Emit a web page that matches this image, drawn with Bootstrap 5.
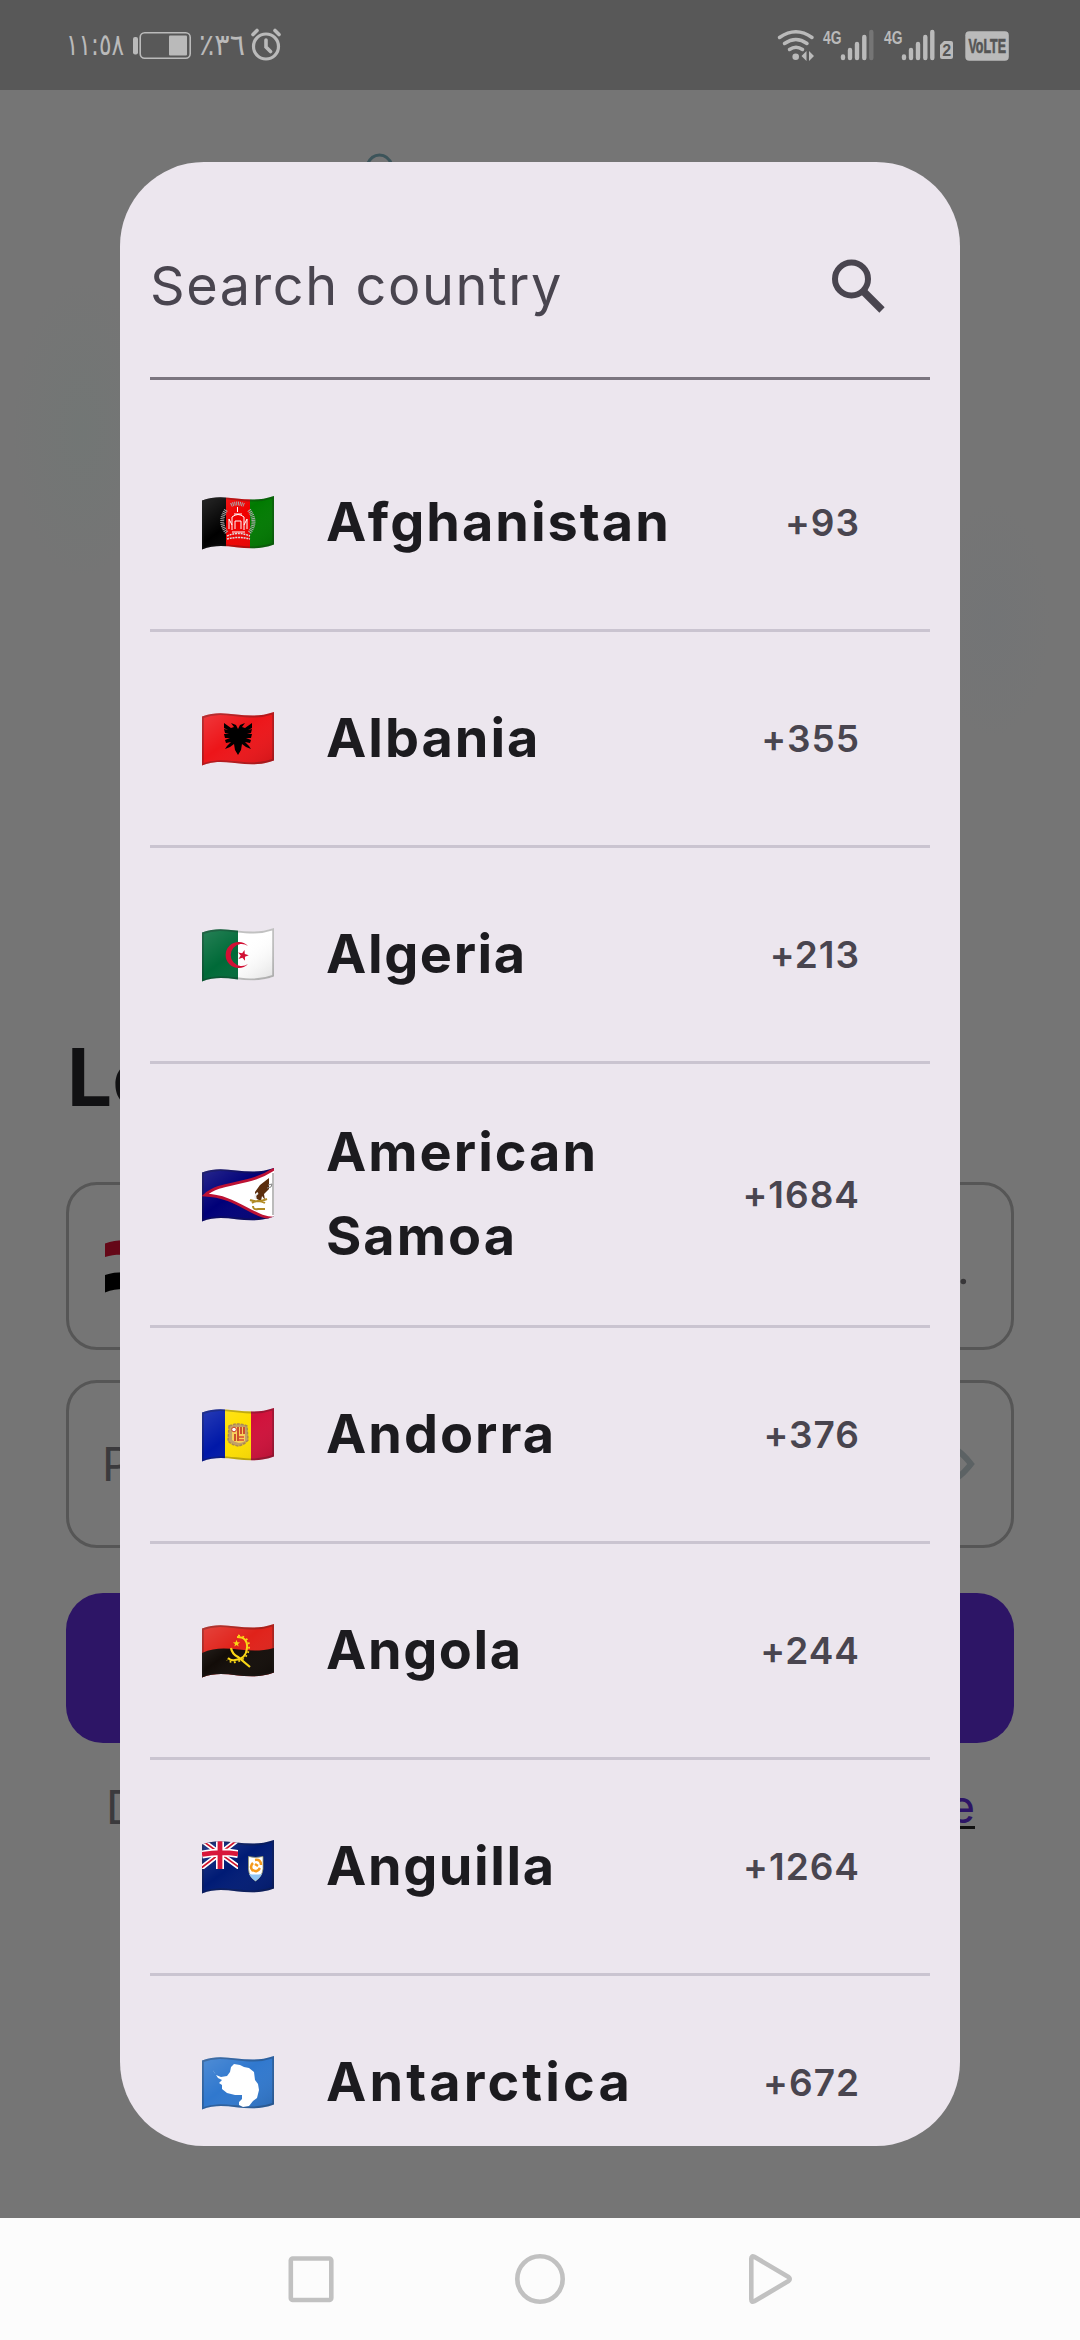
<!DOCTYPE html>
<html lang="en">
<head>
<meta charset="utf-8">
<meta name="viewport" content="width=device-width, initial-scale=1">
<title>Select country</title>
<link href="https://cdn.jsdelivr.net/npm/bootstrap@5.3.0/dist/css/bootstrap.min.css" rel="stylesheet">
<style>
body{width:1080px;height:2340px;overflow:hidden;background:#757575;font-family:Inter,"Liberation Sans",sans-serif;color:#1c1b1f}
.status{height:90px;background:#585858}
.screen{height:2128px;padding:0 66px;background:radial-gradient(ellipse 70px 150px at 82px 340px,rgba(95,125,115,.14),transparent),radial-gradient(ellipse 60px 120px at 992px 530px,rgba(95,110,125,.1),transparent),#757575}
.arch{left:366px;top:153px}
.dot{left:958px;top:1276px}
.heading{padding-top:939px;font-size:80px;line-height:96px;font-weight:700;color:#111113;height:1092px;padding-left:1px}
.field{height:168px;border:3px solid #565656;border-radius:31px;margin-bottom:30px;padding:0 36px;font-size:46px;color:#3b3a3d}
.field span{margin-left:-3px}
.cta{height:150px;border-radius:37px;background:#2d1566;margin-top:45px}
.foot{height:129px;padding:0 39px 0 40px;font-size:46px;color:#3b3a3d}
.foot .signup{color:#2d1566;text-decoration:none;border-bottom:3px solid #111;line-height:40px}
.sheet{left:120px;top:162px;width:840px;height:1984px;border-radius:84px;background:#ece6ee;padding:0 30px}
.search{height:218px;margin-bottom:36px;padding:32px 44px 0 0;border-bottom:3px solid #7b757f;font-size:54px;color:#49454f;letter-spacing:1.6px}
.country{height:216px;padding:0 70px 0 52px;border-bottom:3px solid #cac4d0}
.country.tall{height:264px}
.country:last-child{border-color:transparent}
.cname{width:390px;margin-left:52px;padding-bottom:2px;font-size:54px;line-height:84px;font-weight:700;letter-spacing:2px}
.cname.snug{letter-spacing:1.6px}
.cname.loose{letter-spacing:3.1px}
.ccode{font-size:37px;font-weight:600;color:#49454f;letter-spacing:1px}
.softkeys{height:122px;background:#fcfcfc}
</style>
</head>
<body class="position-relative">
<svg width="0" height="0" class="position-absolute">
<defs>
<clipPath id="wave"><path d="M0 4.500C24-5 44 10 72 0V48.500C44 59 24 43.500 0 53.500Z"/></clipPath>
<linearGradient id="shade" x1="0" y1="0" x2="1" y2="1"><stop offset="0" stop-color="#fff" stop-opacity=".16"/><stop offset=".45" stop-color="#fff" stop-opacity="0"/><stop offset="1" stop-color="#000" stop-opacity=".13"/></linearGradient>
<path id="gloss" d="M0 4.500C24-5 44 10 72 0V48.500C44 59 24 43.500 0 53.500Z" fill="url(#shade)" stroke="#222" stroke-opacity=".28" stroke-width="3.600"/>
<path id="star" d="M0-5 1.200-1.600 4.800-1.500 1.900.6 2.900 4 0 2-2.900 4-1.900.6-4.800-1.500-1.200-1.600Z"/>
</defs>
</svg>

<header class="status">
<svg class="d-block" width="1080" height="90" fill="#bababa" stroke="none">
<g font-family="'DejaVu Sans',sans-serif" font-size="30">
<text x="66" y="55" textLength="58" lengthAdjust="spacingAndGlyphs" direction="ltr" style="unicode-bidi:bidi-override">١١:٥٨</text>
<text x="199" y="55" textLength="46" lengthAdjust="spacingAndGlyphs" direction="ltr" style="unicode-bidi:bidi-override">٪٣٦</text>
</g>
<rect x="133" y="37" width="5" height="17.500" rx="2"/>
<rect x="140.200" y="32.700" width="50" height="25.600" rx="4.500" fill="none" stroke="#bababa" stroke-width="1.600"/>
<rect x="169" y="35.500" width="18" height="20" rx="1"/>
<g fill="none" stroke="#bababa" stroke-width="3.200" stroke-linecap="round"><circle cx="266" cy="46.500" r="12.500"/><path d="M266 40v7l4.500 4.500M253 34.500l4-4M279 34.500l-4-4" stroke-width="3.600"/></g>
<g fill="none" stroke="#bababa" stroke-width="3.500" stroke-linecap="round"><path d="M779.500 37.500q16.500-11.500 32.500 0M784.500 43.500q11.500-8 22.500 0M789.500 49.500q6.500-4.500 13 0"/></g>
<circle cx="795.700" cy="56.700" r="3.300"/><path d="M801.500 56.500l5-5v10zM814 56.500l-5-5v10z" transform="translate(0 -.6)"/>
<g font-family="'Liberation Sans',sans-serif" font-weight="700" font-size="19"><text x="823" y="43.500" textLength="18.500" lengthAdjust="spacingAndGlyphs">4G</text><text x="884" y="43.500" textLength="18.500" lengthAdjust="spacingAndGlyphs">4G</text></g>
<g stroke="#bababa" stroke-width="4.400" stroke-linecap="round"><path d="M843 56.500v1.500M850 50v8M857 44v14M864.300 37v21M904 56.500v1.500M911 50v8M918 44v14M925.300 37v21M932.300 32v26"/><path d="M871.300 32v26" stroke="#757575"/></g>
<path d="M944 41h7q2 0 2 2v14q0 2-2 2h-9q-2 0-2-2V45z"/>
<rect x="965.300" y="31.300" width="43.500" height="29.500" rx="4"/>
<g font-family="'Liberation Sans',sans-serif" font-weight="700" fill="#555"><text x="942.200" y="56" font-size="16">2</text><text x="968.500" y="52.500" font-size="20" textLength="37.500" lengthAdjust="spacingAndGlyphs" stroke="#555" stroke-width=".7">VoLTE</text></g>
</svg>
</header>

<main class="screen">
<div class="heading">Login</div>
<div class="field d-flex align-items-center">
<svg width="72" height="54"><g clip-path="url(#wave)"><path fill="#757575" d="M0 0h72v54H0z"/><path fill="#650717" d="M0-5h72v20C44 26 24 10 0 18z"/><path fill="#000" d="M0 36C24 28 44 41 72 32v25H0z"/></g></svg>
</div>
<div class="field d-flex align-items-center justify-content-between"><span>Password</span>
<svg width="66" height="48" fill="none" stroke="#5c6264" stroke-width="6"><path d="M3 24Q33-14 62 24Q33 62 3 24Z"/><circle cx="33" cy="24" r="9"/></svg>
</div>
<div class="cta"></div>
<div class="foot d-flex align-items-center justify-content-between"><span>Don't</span><a class="signup" href="#">one</a></div>
</main>
<svg class="arch position-absolute" width="28" height="12" fill="none" stroke="#3c545a" stroke-width="3"><path d="M1 12Q5 2 13.500 2T26 12"/></svg>
<svg class="dot position-absolute" width="12" height="12"><circle cx="5.300" cy="5.500" r="2.800" fill="#383739"/></svg>

<section class="sheet position-absolute overflow-hidden">
<div class="search d-flex align-items-center justify-content-between"><span>Search country</span>
<svg width="56" height="56" fill="none" stroke="#49454f" stroke-width="6"><circle cx="21.500" cy="21" r="16.500"/><path d="M34 34l18 18" stroke-width="7.500"/></svg>
</div>

<div class="country d-flex align-items-center">
<svg width="72" height="54"><g clip-path="url(#wave)"><path d="M0 0h24v54H0z"/><path fill="#f00000" d="M24 0h24v54H24z"/><path fill="#007a00" d="M48 0h24v54H48z"/><use href="#gloss"/><g fill="none" stroke="#fff"><path d="M24 14q-8 12 1 23m22-23q9 12 0 23M29 9q6-3 13 0" stroke="#aaa" stroke-width="4" stroke-dasharray="1 .8"/><path d="M25 40q11-5 23 0M25 43q11-3 23 0" stroke="#ddd" stroke-width="1.500" stroke-dasharray="2 .8"/><path d="M27 33V23l3 6M45 33V23l-3 6M30 34V21q6-5 12 0v13M33 33v-8h6v8M30 36h13M35.500 16v-5M32 18h8"/></g></g></svg>
<div class="cname">Afghanistan</div><div class="ccode ms-auto">+93</div></div>

<div class="country d-flex align-items-center">
<svg width="72" height="54"><g clip-path="url(#wave)"><path fill="#ed1519" d="M0 0h72v54H0z"/><use href="#gloss"/><path d="M36 17l-2-4-5-2 3 4-3 1-7-5v5l4 2-4-1 1 4 4 1-5 0 1 4 5 0-5 2 1 3 5-1-4 4-2 3 5-2 4-3 1 6 3 5 3-5 1-6 4 3 5 2-2-3-4-4 5 1 1-3-5-2 5 0 1-4-5 0 4-1 1-4-4 1 4-2v-5l-7 5-3-1 3-4-5 2z"/></g></svg>
<div class="cname">Albania</div><div class="ccode ms-auto">+355</div></div>

<div class="country d-flex align-items-center">
<svg width="72" height="54"><g clip-path="url(#wave)"><path fill="#006a38" d="M0 0h36v54H0z"/><path fill="#fff" d="M36 0h36v54H36z"/><use href="#gloss"/><path fill="#d21034" d="M46 18A13 13 0 1 0 46 36A11 11 0 1 1 46 18Z"/><use href="#star" fill="#d21034" transform="translate(41 27.500) rotate(15) scale(1.150)"/></g></svg>
<div class="cname snug">Algeria</div><div class="ccode ms-auto">+213</div></div>

<div class="country tall d-flex align-items-center">
<svg width="72" height="54"><g clip-path="url(#wave)"><path fill="#000078" d="M0 0h72v54H0z"/><use href="#gloss"/><path fill="#fff" stroke="#bd1234" stroke-width="2.800" d="M3 27C20 12 48 19 75-1V50C54 53 36 28 3 27Z"/><path stroke="#bbb" stroke-width="2" d="M71 5v42"/><path fill="#5a2d0c" d="M67 10l-9 7-5 7 0 6 6 3 1-5 3 4-1-6 5-5z"/><path d="M66 17l4-1-1 3-4 1" fill="none" stroke="#888"/><path d="M56 25q-4 2-2 6" fill="none" stroke="#eee" stroke-width="2"/><path fill="none" stroke="#b08a24" stroke-width="2" d="M48 32q8 3 17-1M50 35q6-4 13 0M51 38q0 4 5 3l7 0"/></g></svg>
<div class="cname">American Samoa</div><div class="ccode ms-auto">+1684</div></div>

<div class="country d-flex align-items-center">
<svg width="72" height="54"><g clip-path="url(#wave)"><path fill="#0018a8" d="M0 0h23v54H0z"/><path fill="#fedf00" d="M23 0h26v54H23z"/><path fill="#d0103a" d="M49 0h23v54H49z"/><use href="#gloss"/><path fill="#c2a169" stroke="#aa8855" stroke-width="1.500" stroke-dasharray="3 1" d="M27 18q9-4 18 0l1 14q-4 5-10 6-6-1-10-5z"/><path fill="#f8d15c" d="M30 19h13v14q-3 2-6 2-5-1-7-3z"/><path stroke="#c63a25" stroke-width="1.700" d="M33 26v7M36 19v14M39 19v7M42 19v7"/><path stroke="#d94b35" stroke-width="1.400" d="M37 29h5m-5 3h5"/><circle cx="32" cy="21.500" r="2.300" fill="#fff" stroke="#c63a25"/></g></svg>
<div class="cname">Andorra</div><div class="ccode ms-auto">+376</div></div>

<div class="country d-flex align-items-center">
<svg width="72" height="54"><g clip-path="url(#wave)"><path fill="#e0221a" d="M0 0h72v54H0z"/><path fill="#120c08" d="M0 29C24 18 44 32 72 24v32H0z"/><use href="#gloss"/><g fill="none" stroke="#f9d616"><path stroke-width="2" d="M35 13Q46 13 45 24T33 36q-4 1-7-2"/><path stroke-width="1.800" stroke-dasharray="1.800 2.600" d="M36 11.500Q48 13 47 24T34 38q-5 1-9-2"/><path stroke-width="2.200" d="M29 24q1 6 7 9l12 10"/></g><use href="#star" fill="#f9d616" transform="translate(34.500 19.500) scale(.75)"/></g></svg>
<div class="cname snug">Angola</div><div class="ccode ms-auto">+244</div></div>

<div class="country d-flex align-items-center">
<svg width="72" height="54"><g clip-path="url(#wave)"><path fill="#001b75" d="M0 0h72v54H0z"/><use href="#gloss"/><svg width="36" height="29"><g fill="none"><path stroke="#fff" stroke-width="5" d="M-2 29L38-2M-2-1L38 28"/><path stroke="#cf142b" stroke-width="1.700" d="M-2 29L38-2M-2-1L38 28"/><path stroke="#fff" stroke-width="8" d="M18-1v30M0 14.500Q18 11 36 14"/><path stroke="#d8173a" stroke-width="4.800" d="M18-1v30M0 14.500Q18 11 36 14"/></g></svg><path fill="#fff" stroke="#9a9b70" stroke-width=".8" d="M46.500 16.500q7 2 14.500 0V29q-1 8-7.500 12Q47 37 46.500 29z"/><path fill="#8fc5f5" d="M47 34q6 1 13 0-2 4-6.500 7Q49 38 47 34z"/><path fill="none" stroke="#f59a1c" stroke-width="2.500" d="M51 31q-4-4 0-8M53 20q6-1 6 5M58 28q-3 5-7 2M53 24l3 2"/></g></svg>
<div class="cname snug">Anguilla</div><div class="ccode ms-auto">+1264</div></div>

<div class="country d-flex align-items-center">
<svg width="72" height="54"><g clip-path="url(#wave)"><path fill="#3078ce" d="M0 0h72v54H0z"/><use href="#gloss"/><path fill="#fff" d="M11 14l3 5 5 2 6-1 3-4 1-5 3-3 6 1 4 2 5 1 5 4 1 8 3 4 1 6-2 8-4 3-4 5-6 1-4-2 0-3 3-3 0-4-7 0-8-2-5-4 0-4-3-2 3-3-4-2-4-6z"/></g></svg>
<div class="cname loose">Antarctica</div><div class="ccode ms-auto">+672</div></div>
</section>

<nav class="softkeys">
<svg class="d-block" width="1080" height="122" fill="none" stroke="#c1c1c1" stroke-width="4.600" stroke-linejoin="round"><rect x="290.800" y="40.500" width="40.500" height="41.500" rx="2"/><circle cx="540" cy="61" r="22.700"/><path d="M751.300 40.800q0-3.500 3-2L788.500 59q2.500 2 0 4L754.300 83.300q-3 1.500-3-2z"/></svg>
</nav>
<script src="https://cdn.jsdelivr.net/npm/bootstrap@5.3.0/dist/js/bootstrap.bundle.min.js"></script>
</body>
</html>
